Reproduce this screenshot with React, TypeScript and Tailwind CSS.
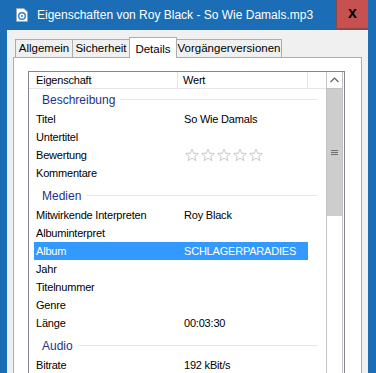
import React from 'react';

const ui = { fontFamily: '"Liberation Sans", Arial, sans-serif' };

type Row = { label: string; value?: string; stars?: boolean; selected?: boolean };
type Group = { title: string; rows: Row[] };

const groups: Group[] = [
  {
    title: 'Beschreibung',
    rows: [
      { label: 'Titel', value: 'So Wie Damals' },
      { label: 'Untertitel' },
      { label: 'Bewertung', stars: true },
      { label: 'Kommentare' },
    ],
  },
  {
    title: 'Medien',
    rows: [
      { label: 'Mitwirkende Interpreten', value: 'Roy Black' },
      { label: 'Albuminterpret' },
      { label: 'Album', value: 'SCHLAGERPARADIES', selected: true },
      { label: 'Jahr' },
      { label: 'Titelnummer' },
      { label: 'Genre' },
      { label: 'Länge', value: '00:03:30' },
    ],
  },
  {
    title: 'Audio',
    rows: [{ label: 'Bitrate', value: '192 kBit/s' }],
  },
];

const Star = () => (
  <svg width="16" height="16" viewBox="0 0 16 16">
    <path
      d="M8 2 L9.8 6.2 L14.3 6.4 L10.8 9.3 L12 13.7 L8 11.2 L4 13.7 L5.2 9.3 L1.7 6.4 L6.2 6.2 Z"
      fill="white"
      stroke="#c8c8c8"
      strokeWidth="1"
      strokeLinejoin="round"
    />
  </svg>
);

const FileIcon = () => (
  <svg width="12" height="14" viewBox="0 0 12 14">
    <path d="M0.5 0.5 H8 L11.5 4 V13.5 H0.5 Z" fill="white" stroke="#9aa6b4" />
    <circle cx="6" cy="8" r="3.3" fill="none" stroke="#2a7fd0" strokeWidth="1.4" />
    <circle cx="6" cy="8" r="1" fill="#2a7fd0" />
  </svg>
);

const Tab = ({ label, w, active }: { label: string; w: string; active?: boolean }) =>
  active ? (
    <div className={`relative z-10 -mx-[1px] -mb-px flex h-[21px] justify-center border border-b-0 border-[#adadad] bg-white pt-[3px] text-[11.5px] text-black ${w}`}>
      {label}
    </div>
  ) : (
    <div className={`flex h-[18px] items-center justify-center border border-b-0 border-[#adadad] bg-[#f0f0f0] text-[11.5px] text-black [&+&]:border-l-0 ${w}`}>
      {label}
    </div>
  );

export default function App() {
  return (
    <div className="flex h-[373px] w-[376px] flex-col overflow-hidden bg-[#1b6db5]" style={ui}>
      {/* title bar */}
      <div className="flex h-[30px] shrink-0 items-center">
        <div className="ml-[16px] mr-[9px] flex items-center">
          <FileIcon />
        </div>
        <div className="flex-1 text-[12px] text-white">Eigenschaften von Roy Black - So Wie Damals.mp3</div>
        <div className="mr-[8px] flex h-[29px] w-[32px] items-center justify-center self-start border-b border-l border-[#8e4747] bg-[#c75050] pb-[2px] text-[16px] font-bold text-black">
          x
        </div>
      </div>

      {/* body */}
      <div className="ml-[7px] mr-[8px] flex flex-1 flex-col bg-[#f0f0f0] px-[6px] pt-[7px]">
        <div className="flex items-end pl-[2px]">
          <Tab label="Allgemein" w="w-[58px]" />
          <Tab label="Sicherheit" w="w-[57px]" />
          <Tab label="Details" w="w-[48px]" active />
          <Tab label="Vorgängerversionen" w="w-[106px]" />
        </div>

        <div className="flex-1 border border-[#adadad] bg-white pl-[14px] pr-[16px] pt-[13px]">
          <div className="flex h-[400px] border border-[#828790] bg-white pr-[1px] tracking-[-0.2px]">
            {/* list content */}
            <div className="flex w-[298px] flex-col">
              <div className="flex h-[17px] border-b border-[#e5e5e5] text-[11px] text-black">
                <div className="flex w-[149px] items-center border-r border-[#e5e5e5] pl-[7px]">Eigenschaft</div>
                <div className="flex w-[130px] items-center border-r border-[#e5e5e5] pl-[5px]">Wert</div>
              </div>

              {groups.map((g, gi) => (
                <div key={g.title} className="flex flex-col">
                  <div className={`ml-[5px] flex h-[21px] w-[283px] items-center pl-[8px] ${gi > 0 ? 'mt-[3px]' : ''}`}>
                    <span className="text-[12px] tracking-normal text-[#1e3287]">{g.title}</span>
                    <div className="ml-[5px] h-px flex-1 bg-[#dfe9f5]" />
                  </div>
                  {g.rows.map((r) => (
                    <div
                      key={r.label}
                      className={`ml-[5px] flex h-[18px] w-[274px] items-center text-[11px] ${
                        r.selected ? 'bg-[#3399ff] text-white' : 'text-black'
                      }`}
                    >
                      <div className="w-[148px] pl-[2px]">{r.label}</div>
                      <div className="flex flex-1 items-center pl-[2px]">
                        {r.stars ? (
                          <div className="flex">
                            <Star />
                            <Star />
                            <Star />
                            <Star />
                            <Star />
                          </div>
                        ) : (
                          r.value
                        )}
                      </div>
                    </div>
                  ))}
                </div>
              ))}
            </div>

            {/* scrollbar */}
            <div className="flex w-[17px] flex-col border-x border-[#c2c2c2] bg-white">
              <div className="flex h-[17px] items-center justify-center border-b border-[#c2c2c2]">
                <svg width="9" height="6" viewBox="0 0 9 6">
                  <path d="M0.5 5 L4.5 1 L8.5 5" fill="none" stroke="#606060" strokeWidth="1.2" />
                </svg>
              </div>
              <div className="flex h-[127px] items-center justify-center bg-[#cdcdcd]">
                <svg width="7" height="7" viewBox="0 0 7 7">
                  <path d="M0 1.5 H7 M0 3.5 H7 M0 5.5 H7" stroke="#707070" strokeWidth="1" />
                </svg>
              </div>
            </div>
          </div>
        </div>
      </div>
    </div>
  );
}
